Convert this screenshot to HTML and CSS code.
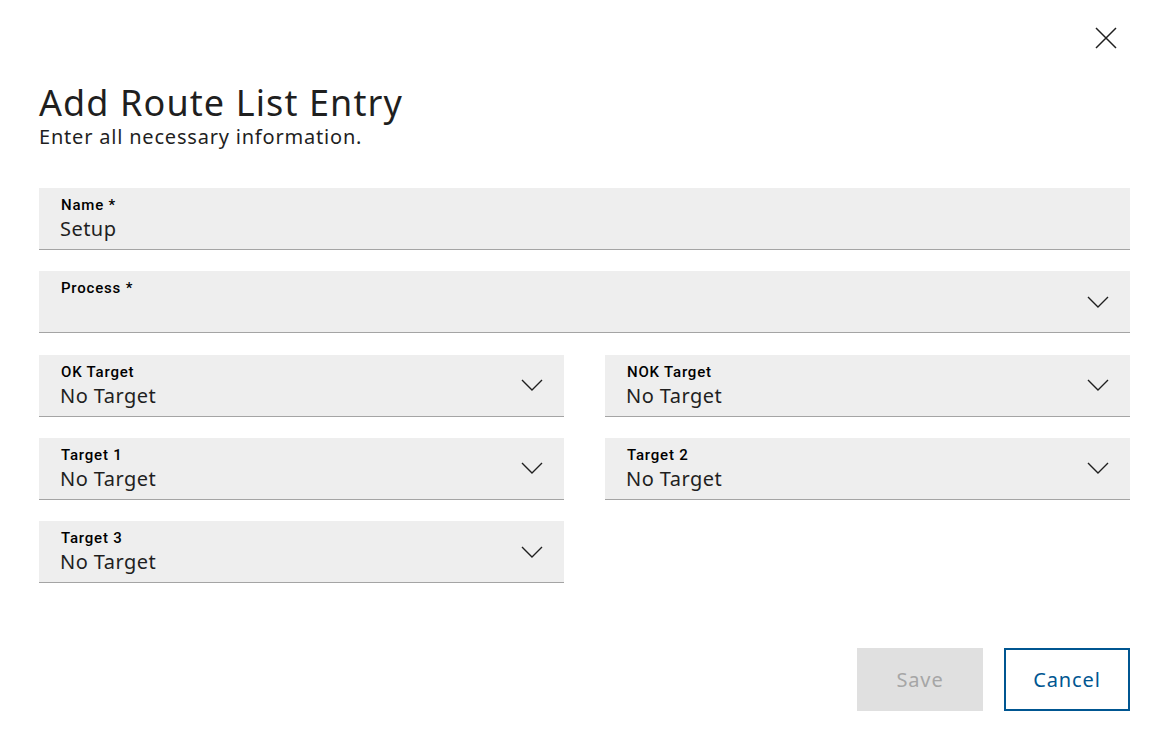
FILE: index.html
```html
<!DOCTYPE html>
<html lang="en">
<head>
<meta charset="utf-8">
<title>Add Route List Entry</title>
<link rel="stylesheet" href="styles.css">
</head>
<body>
<div class="dialog">
  <div class="topbar">
    <button class="close" aria-label="Close">
      <svg width="22" height="22" viewBox="0 0 22 22"><path d="M1 1L21 21M21 1L1 21" stroke="#1f1f1f" stroke-width="1.5" fill="none"/></svg>
    </button>
  </div>
  <h1 class="title">Add Route List Entry</h1>
  <p class="subtitle">Enter all necessary information.</p>
  <div class="form">
    <div class="field">
      <div class="field-text">
        <span class="label">Name *</span>
        <span class="value">Setup</span>
      </div>
    </div>
    <div class="field select">
      <div class="field-text">
        <span class="label">Process *</span>
        <span class="value"></span>
      </div>
      <svg class="chev" width="22" height="12" viewBox="0 0 22 12"><path d="M1 1L11 11L21 1" stroke="#1f1f1f" stroke-width="1.4" fill="none"/></svg>
    </div>
    <div class="grid">
      <div class="field select">
        <div class="field-text"><span class="label">OK Target</span><span class="value">No Target</span></div>
        <svg class="chev" width="22" height="12" viewBox="0 0 22 12"><path d="M1 1L11 11L21 1" stroke="#1f1f1f" stroke-width="1.4" fill="none"/></svg>
      </div>
      <div class="field select">
        <div class="field-text"><span class="label">NOK Target</span><span class="value">No Target</span></div>
        <svg class="chev" width="22" height="12" viewBox="0 0 22 12"><path d="M1 1L11 11L21 1" stroke="#1f1f1f" stroke-width="1.4" fill="none"/></svg>
      </div>
      <div class="field select">
        <div class="field-text"><span class="label">Target 1</span><span class="value">No Target</span></div>
        <svg class="chev" width="22" height="12" viewBox="0 0 22 12"><path d="M1 1L11 11L21 1" stroke="#1f1f1f" stroke-width="1.4" fill="none"/></svg>
      </div>
      <div class="field select">
        <div class="field-text"><span class="label">Target 2</span><span class="value">No Target</span></div>
        <svg class="chev" width="22" height="12" viewBox="0 0 22 12"><path d="M1 1L11 11L21 1" stroke="#1f1f1f" stroke-width="1.4" fill="none"/></svg>
      </div>
      <div class="field select">
        <div class="field-text"><span class="label">Target 3</span><span class="value">No Target</span></div>
        <svg class="chev" width="22" height="12" viewBox="0 0 22 12"><path d="M1 1L11 11L21 1" stroke="#1f1f1f" stroke-width="1.4" fill="none"/></svg>
      </div>
    </div>
  </div>
  <div class="actions">
    <button class="btn btn-save" disabled>Save</button>
    <button class="btn btn-cancel">Cancel</button>
  </div>
</div>
</body>
</html>
```
FILE: styles.css
```css
* { box-sizing: border-box; }
html, body { margin: 0; padding: 0; background: #ffffff; }
body {
  font-family: "Noto Sans", "Open Sans", sans-serif;
  color: #1f1f1f;
  width: 1167px;
  height: 751px;
  overflow: hidden;
}
.dialog {
  padding: 26px 37px 0 39px;
  display: flex;
  flex-direction: column;
}
.topbar {
  display: flex;
  justify-content: flex-end;
  height: 26px;
  padding-right: 13px;
}
.close {
  border: 0;
  background: none;
  padding: 0;
  width: 22px;
  height: 22px;
  margin-top: 1px;
  cursor: pointer;
}
.title {
  margin: 31px 0 0 0;
  font-size: 36px;
  font-weight: 400;
  line-height: 40px;
  letter-spacing: 1.1px;
}
.subtitle {
  margin: 2px 0 0 0;
  font-size: 20px;
  line-height: 24px;
  font-weight: 400;
  letter-spacing: 0.8px;
}
.form {
  margin-top: 39px;
  display: flex;
  flex-direction: column;
  gap: 21.25px;
}
.grid {
  display: grid;
  grid-template-columns: 1fr 1fr;
  column-gap: 41px;
  row-gap: 21.25px;
}
.field {
  background: #eeeeee;
  border-bottom: 1px solid #a4a4a4;
  height: 62px;
  display: flex;
  align-items: center;
  padding: 0 21px 0 21px;
}
.field-text {
  flex: 1;
  display: flex;
  flex-direction: column;
  align-self: flex-start;
  padding-top: 8px;
}
.label {
  font-family: "Roboto", "Liberation Sans", sans-serif;
  font-weight: 500;
  font-size: 15px;
  line-height: 18px;
  letter-spacing: 0.8px;
  color: #000000;
  padding-left: 1px;
}
.value {
  font-size: 20px;
  line-height: 24px;
  min-height: 24px;
  margin-top: 3px;
  letter-spacing: 0.45px;
  color: #1f1f1f;
}
.chev { flex: none; }
.actions {
  margin-top: 65px;
  display: flex;
  justify-content: flex-end;
  gap: 21px;
}
.btn {
  width: 126px;
  height: 63px;
  font-family: "Noto Sans", "Open Sans", sans-serif;
  font-size: 20px;
  letter-spacing: 0.9px;
  border: 0;
  padding: 0;
}
.btn-save {
  background: #e0e0e0;
  color: #a6a6a6;
}
.btn-cancel {
  background: #ffffff;
  color: #005691;
  border: 2px solid #005691;
}
```
